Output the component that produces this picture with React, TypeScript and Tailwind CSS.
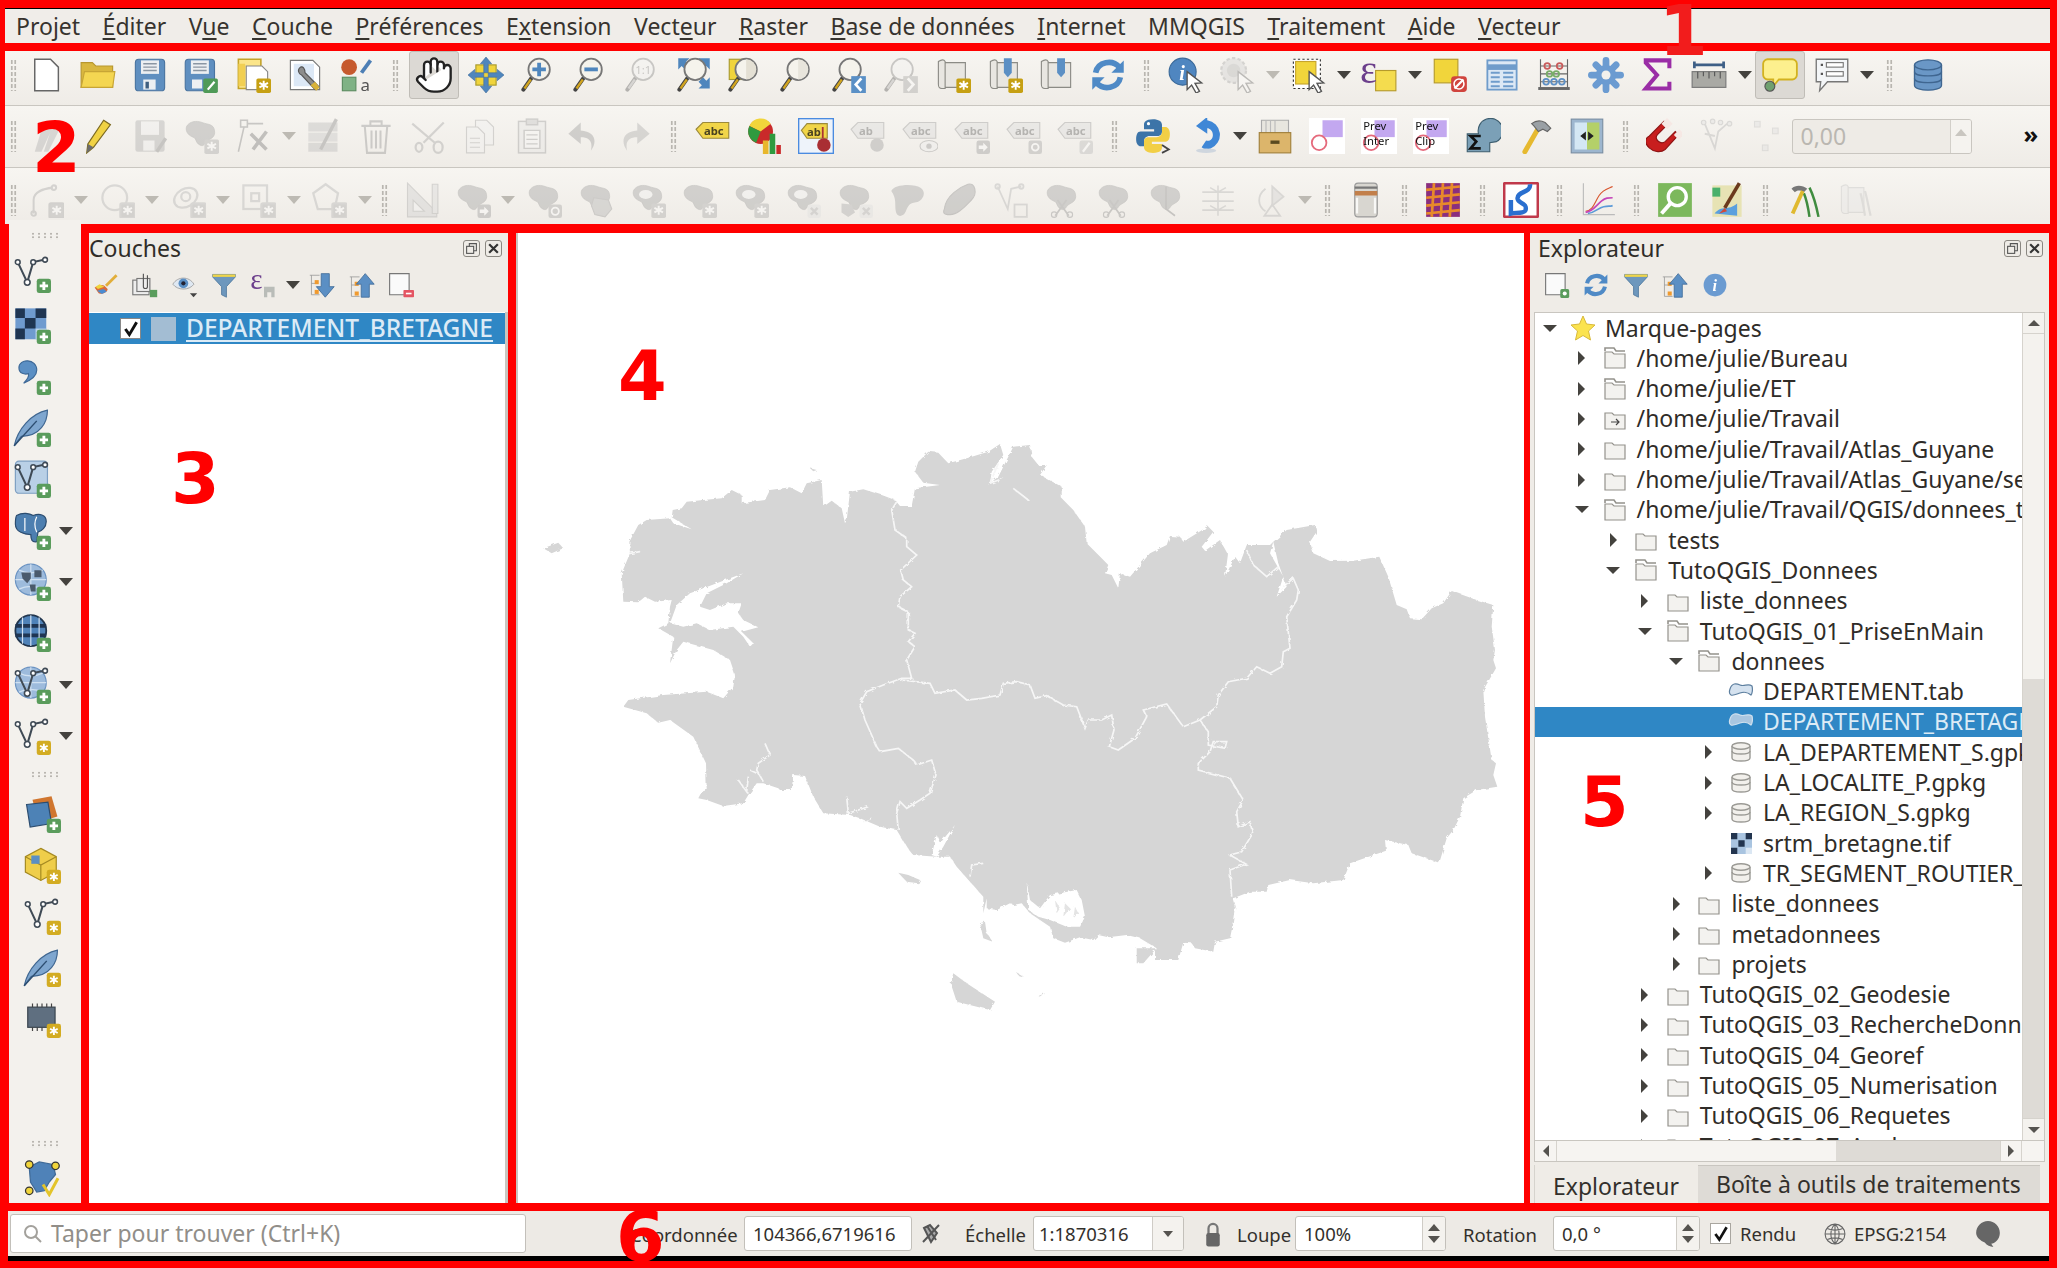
import type { ReactNode } from 'react';
import { Hand } from 'lucide-react';

const gearBadge = (
  <g>
    <rect x="19" y="19" width="13" height="13" rx="1.5" fill="#c6a013" />
    <path d="M25.5 21v8M21.7 23l7.6 4M21.7 27l7.6-4" stroke="#fff" strokeWidth="1.7" />
  </g>
);
const plusBadge = (
  <g>
    <rect x="20" y="20" width="12" height="12" rx="2" fill="#5a9c5c" />
    <path d="M26 22.5v7M22.5 26h7" stroke="#fff" strokeWidth="2.4" />
  </g>
);
const starBadge = (
  <g>
    <rect x="20" y="20" width="12" height="12" rx="2" fill="#d3ac22" />
    <path d="M26 22.5v7M22.8 24.2l6.4 3.6M22.8 27.8l6.4-3.6" stroke="#fff" strokeWidth="1.6" />
  </g>
);
const xBadge = (
  <g>
    <rect x="20" y="20" width="12" height="12" rx="2" fill="#e4dcd6" />
    <path d="M23 23l6 6M29 23l-6 6" stroke="#c99" strokeWidth="2.2" />
  </g>
);
const arrowBadge = (
  <g>
    <rect x="20" y="20" width="12" height="12" rx="2" fill="#8f8f8a" />
    <path d="M22 24.5h4v-2.5l4 4-4 4v-2.5h-4z" fill="#fff" />
  </g>
);
const blob = <path d="M3 8c2-5 9-6 14-4s10 1 11 7-3 7-6 9-3 6-7 4-3-6-6-7-7-4-6-9z" fill="#8f9689" stroke="#777" strokeWidth="0.6" />;
const mag = (
  <g>
    <path d="M10 19L3 29" stroke="#444" strokeWidth="3.6" strokeLinecap="round" />
    <path d="M9.6 20L4 28" stroke="#d2a51f" strokeWidth="2" />
    <circle cx="17" cy="11" r="9.5" fill="#f5f3ec" stroke="#777" strokeWidth="1.6" />
  </g>
);
const cursor = <path d="M17 13l13 10-6 .5 4 7-3 1.500-4-7-4 4z" fill="#fff" stroke="#555" strokeWidth="1.2" />;
const doc = (fill = '#fff') => <path d="M6 2h14l7 7v21H6z" fill={fill} stroke="#666" strokeWidth="1.3" />;
const vShape = (
  <g fill="none" stroke="#3f4a55" strokeWidth="1.7">
    <path d="M4 6l8 17 5-17 9-2" />
    <g fill="#fff" strokeWidth="1.3">
      <circle cx="4" cy="6" r="2" />
      <circle cx="12" cy="23" r="2.4" />
      <circle cx="17" cy="6" r="2" />
      <circle cx="27" cy="4" r="2" />
    </g>
  </g>
);
const globe = (
  <g>
    <circle cx="15" cy="14" r="13" fill="#9dbbdc" stroke="#6b93c2" />
    <path d="M2 14h26M15 1v26M5 6c6 3 14 3 20 0M5 22c6-3 14-3 20 0" stroke="#cfe0f1" fill="none" />
  </g>
);
const cyl = (c: string, s: string) => (
  <g fill={c} stroke={s} strokeWidth="1.2">
    <path d="M4 7v18c0 6 24 6 24 0V7" />
    <ellipse cx="16" cy="7" rx="12" ry="4.5" />
    <path d="M4 13c0 5 24 5 24 0M4 19c0 5 24 5 24 0" fill="none" />
  </g>
);
const abcTag = (t: string, c: string) => (
  <g>
    <path d="M1 10l6-6h23v14H7z" fill={c} stroke="#9c8a3a" strokeWidth="1" />
    <text x="8" y="15.5" fontSize="10" fontWeight="700" fontFamily="Noto Sans" fill="#4a4320">{t}</text>
  </g>
);
const prev = (a: string, b: string) => (
  <g>
    <rect x="0" y="0" width="32" height="32" fill="#fff" />
    <rect x="12" y="2" width="18" height="15" fill="#c3a8f0" />
    <circle cx="9" cy="22" r="6.5" fill="none" stroke="#e56a7c" strokeWidth="1.6" />
    <text x="2" y="11" fontSize="10" fontFamily="Noto Sans" fill="#111">{a}</text>
    <text x="2" y="24" fontSize="10" fontFamily="Noto Sans" fill="#111">{b}</text>
  </g>
);

const ICONS: Record<string, ReactNode> = {
  new: doc(),
  open: (
    <g>
      <path d="M1 27V5h10l3 3h15v19z" fill="#d9b73f" stroke="#b8972f" />
      <path d="M1 27l3-14h27l-2 14z" fill="#f4d651" stroke="#c7a535" />
    </g>
  ),
  save: (
    <g>
      <rect x="3" y="2" width="26" height="28" rx="3" fill="#5f8fc0" stroke="#4a74a0" />
      <path d="M8 3h16v12H8z" fill="#eceff2" />
      <path d="M10 6h12M10 9h12M10 12h12" stroke="#8a96a3" strokeWidth="1.3" />
      <rect x="10" y="20" width="11" height="9" fill="#eceff2" />
      <rect x="12" y="22" width="3" height="6" fill="#3f5f80" />
    </g>
  ),
  saveas: (
    <g>
      <rect x="2" y="2" width="26" height="28" rx="3" fill="#5f8fc0" stroke="#4a74a0" />
      <path d="M7 3h16v12H7z" fill="#eceff2" />
      <path d="M9 6h12M9 9h12M9 12h12" stroke="#8a96a3" strokeWidth="1.3" />
      <rect x="8" y="20" width="9" height="8" fill="#eceff2" />
      <rect x="18" y="19" width="13" height="13" rx="1.5" fill="#4f9a57" />
      <path d="M22 29l6-7" stroke="#fff" strokeWidth="2" />
    </g>
  ),
  layoutnew: (
    <g>
      <path d="M3 2h20v26H3z" fill="#fbe58a" stroke="#c4a328" strokeWidth="1.4" />
      <path d="M10 8h14l5 5v16H10z" fill="#fff" stroke="#888" />
      <path d="M3 6h6v20H3z" fill="#f1cf52" />
      {gearBadge}
    </g>
  ),
  layoutmgr: (
    <g>
      <path d="M3 3h20l6 6v20H3z" fill="#fff" stroke="#777" />
      <path d="M6 6h18v20H6z" fill="#dce8f6" />
      <path d="M12 9c-3 2-2 6 1 7l12 13 3-3-12-12c0-4-2-6-4-5z" fill="#8c8c8c" stroke="#555" />
      <path d="M21 25l5 5 3-3-4-5z" fill="#d8b23a" />
    </g>
  ),
  style: (
    <g>
      <circle cx="9" cy="9" r="7" fill="#c65a2e" />
      <path d="M20 14l8-11" stroke="#4d7fb5" strokeWidth="3.4" />
      <rect x="3" y="18" width="12" height="12" fill="#7fb285" stroke="#5c8c61" />
      <text x="19" y="30" fontSize="15" fontFamily="Noto Sans" fill="#555">a</text>
    </g>
  ),
  pancanvas: (
    <g>
      <rect x="7" y="7" width="18" height="18" fill="#f0d43c" stroke="#a99a2e" />
      <path d="M16 0l5 6h-3v8h-4V6h-3zM16 32l5-6h-3v-8h-4v8h-3zM0 16l6-5v3h8v4H6v3zM32 16l-6-5v3h-8v4h8v3z" fill="#4f86bd" stroke="#3c6a99" strokeWidth="0.5" />
    </g>
  ),
  zoomin: <g>{mag}<path d="M17 5v12M11 11h12" stroke="#4f86bd" strokeWidth="3.4" /></g>,
  zoomout: <g>{mag}<path d="M11 11h12" stroke="#4f86bd" strokeWidth="3.4" /></g>,
  zoom11: <g>{mag}<text x="10" y="15" fontSize="10" fontFamily="Noto Sans" fill="#777">1:1</text></g>,
  zoomfull: (
    <g>
      <path d="M2 1h10l-3 3 3 3-4 4-3-3-3 3zM30 1H20l3 3-3 3 4 4 3-3 3 3zM30 28H20l3-3-3-3 4-4 3 3 3-3z" fill="#4f86bd" />
      {mag}
    </g>
  ),
  zoomlayer: <g><rect x="2" y="2" width="18" height="18" fill="#f0d43c" stroke="#a99a2e" />{mag}<path d="M17 2a9 9 0 010 18z" fill="#e4e0d4" /></g>,
  zoomsel: <g>{mag}<path d="M17 2a9 9 0 010 18z" fill="#e8e5dc" /></g>,
  zoomlast: <g>{mag}<rect x="18" y="17" width="13" height="15" fill="#5a90c6" /><path d="M27 19l-5 5.500 5 5.500" stroke="#fff" strokeWidth="2.4" fill="none" /></g>,
  zoomnext: <g>{mag}<rect x="18" y="17" width="13" height="15" fill="#9a9a92" /><path d="M22 19l5 5.500-5 5.500" stroke="#fff" strokeWidth="2.4" fill="none" /></g>,
  scroll: (
    <g>
      <path d="M3 4c3-2 5-2 6 0v24H6c-3 0-3-2-3-4zM9 5h18v22H9z" fill="#e8e6e1" stroke="#8b8b85" />
      {gearBadge}
    </g>
  ),
  scrollpin: (
    <g>
      <path d="M3 4c3-2 5-2 6 0v24H6c-3 0-3-2-3-4zM9 5h18v22H9z" fill="#e8e6e1" stroke="#8b8b85" />
      <path d="M15 1h7v13l-3.500 4-3.500-4z" fill="#5b8fc4" />
      {gearBadge}
    </g>
  ),
  scrollshow: (
    <g>
      <path d="M3 4c3-2 5-2 6 0v24H6c-3 0-3-2-3-4zM9 5h20v22H9z" fill="#e8e6e1" stroke="#8b8b85" />
      <path d="M17 1h7v13l-3.500 4-3.500-4z" fill="#5b8fc4" />
    </g>
  ),
  refresh: (
    <g fill="none" strokeWidth="5" stroke="#4f8ac6">
      <path d="M5 14C7 4 20 2 26 9" />
      <path d="M27 18c-2 10-15 12-21 5" />
      <path d="M30 3v11H19z" fill="#4f8ac6" strokeWidth="0" />
      <path d="M2 29V18h11z" fill="#4f8ac6" strokeWidth="0" />
    </g>
  ),
  identify: (
    <g>
      <circle cx="13" cy="13" r="12" fill="#4f86c0" stroke="#3c6a99" />
      <text x="10" y="20" fontSize="18" fontStyle="italic" fontWeight="700" fontFamily="Liberation Serif" fill="#fff">i</text>
      {cursor}
    </g>
  ),
  run: (
    <g>
      <circle cx="13" cy="12" r="11" fill="#ccc" stroke="#999" strokeDasharray="3 2" strokeWidth="2" />
      <circle cx="13" cy="12" r="6" fill="#aab" />
      {cursor}
    </g>
  ),
  select: (
    <g>
      <rect x="3" y="2" width="24" height="26" fill="#fff" stroke="#333" strokeDasharray="2 2" />
      <rect x="5" y="4" width="18" height="20" fill="#f1d53b" stroke="#c7a52c" />
      {cursor}
    </g>
  ),
  expr: (
    <g>
      <rect x="13" y="12" width="18" height="18" fill="#f4dc4e" stroke="#b59a2c" />
      <text x="-1" y="23" fontSize="36" fontFamily="Liberation Serif" fill="#6c3f8c">ε</text>
    </g>
  ),
  deselect: (
    <g>
      <rect x="2" y="2" width="21" height="21" fill="#f1d53b" stroke="#b59a2c" />
      <rect x="17" y="17" width="14" height="14" rx="3" fill="#d0443e" />
      <path d="M20 28l8-8" stroke="#fff" strokeWidth="2" />
      <circle cx="24" cy="24" r="4.4" fill="none" stroke="#fff" strokeWidth="1.4" />
    </g>
  ),
  table: (
    <g>
      <rect x="3" y="3" width="26" height="26" fill="#dce8f5" stroke="#6f9ccb" strokeWidth="1.6" />
      <path d="M3 9h26" stroke="#6f9ccb" strokeWidth="5" />
      <path d="M6 14h8M17 14h9M6 18h8M17 18h9M6 22h8M17 22h9M6 26h8M17 26h9" stroke="#6f9ccb" strokeWidth="1.6" />
    </g>
  ),
  abacus: (
    <g fill="none">
      <path d="M4 2v25M28 2v25M4 8h24M4 15h24M4 22h24" stroke="#666" />
      <path d="M2 28h28" stroke="#666" strokeWidth="2.6" />
      <g stroke="#c85b5b" strokeWidth="1.6"><circle cx="10" cy="8" r="2.5" /><circle cx="21" cy="8" r="2.5" /></g>
      <g stroke="#79ad68" strokeWidth="1.6"><circle cx="12" cy="15" r="2.5" /><circle cx="18" cy="15" r="2.5" /></g>
      <g stroke="#5d8fc4" strokeWidth="1.6"><circle cx="9" cy="22" r="2.5" /><circle cx="16" cy="22" r="2.5" /><circle cx="23" cy="22" r="2.5" /></g>
    </g>
  ),
  gear: (
    <g>
      <g stroke="#6b9bd1" strokeWidth="6" strokeLinecap="round">
        <path d="M16 3v26M3 16h26M7 7l18 18M25 7L7 25" />
      </g>
      <circle cx="16" cy="16" r="9" fill="#6b9bd1" />
      <circle cx="16" cy="16" r="4" fill="#f2f0ec" />
    </g>
  ),
  sigma: <path d="M27 10V3H6v2l10 11L6 28h21v-6" fill="none" stroke="#9a2da6" strokeWidth="3.6" />,
  ruler: (
    <g>
      <path d="M3 4v6M29 4v6M3 7h26" stroke="#3e5f86" strokeWidth="2.4" />
      <rect x="1" y="13" width="30" height="14" fill="#a9a9a4" stroke="#777" />
      <path d="M6 13v6M11 13v4M16 13v6M21 13v4M26 13v6" stroke="#555" />
    </g>
  ),
  tip: (
    <g>
      <path d="M5 2h22c2 0 4 2 4 4v10c0 2-2 4-4 4H15l-5 6v-6H5c-2 0-4-2-4-4V6c0-2 2-4 4-4z" fill="#fdf08e" stroke="#d3b21f" strokeWidth="1.6" />
      <circle cx="7" cy="26" r="4.4" fill="#6fa06f" stroke="#555" />
    </g>
  ),
  annot: (
    <g>
      <path d="M2 2h28v20H12l-7 8 1-8H2z" fill="#f4f6f8" stroke="#777" strokeWidth="1.2" />
      <path d="M6 7h2M6 15h2" stroke="#555" strokeWidth="2" />
      <rect x="11" y="5" width="15" height="4" fill="#fff" stroke="#777" />
      <rect x="11" y="13" width="15" height="4" fill="#fff" stroke="#777" />
    </g>
  ),
  db: cyl('#6a97c6', '#3f6690'),
  toggle: (
    <g>
      <path d="M6 30L14 4l8 4-10 22zM14 30L22 6l6 4-10 20z" fill="#a8a59c" />
    </g>
  ),
  pencil: (
    <g>
      <path d="M21 2l6 4-15 20-6 5 1-8z" fill="#f0d244" stroke="#7c6a22" strokeWidth="1.1" />
      <path d="M6 31l1-8 5 3z" fill="#6c6c6c" />
    </g>
  ),
  saveedit: (
    <g>
      <rect x="3" y="2" width="26" height="28" rx="2" fill="#a5a29a" />
      <path d="M8 3h16v12H8z" fill="#eee" />
      <rect x="10" y="20" width="10" height="9" fill="#eee" />
      <path d="M22 30l8-12" stroke="#777" strokeWidth="3" />
    </g>
  ),
  blobgear: <g>{blob}{gearBadge}</g>,
  blobarrow: <g>{blob}{arrowBadge}</g>,
  blobrot: <g>{blob}<rect x="20" y="20" width="12" height="12" rx="2" fill="#999" /><circle cx="26" cy="26" r="3.2" fill="none" stroke="#fff" strokeWidth="1.6" /></g>,
  vertex: (
    <g fill="none" stroke="#777" strokeWidth="1.4">
      <rect x="5" y="2" width="6" height="6" />
      <path d="M11 5h14M8 8L3 30" />
      <path d="M14 14l14 14M28 12L16 28" stroke="#666" strokeWidth="3.2" />
    </g>
  ),
  tableedit: (
    <g>
      <rect x="2" y="4" width="26" height="8" fill="#b9b48f" />
      <rect x="2" y="13" width="26" height="8" fill="#c5c19f" />
      <rect x="2" y="22" width="26" height="8" fill="#b9b48f" />
      <path d="M27 1L13 28" stroke="#777" strokeWidth="3" />
    </g>
  ),
  trash: (
    <g fill="none" stroke="#a07e76" strokeWidth="1.8">
      <path d="M3 7h26M11 7V3h10v4M6 7l2 24h16l2-24M12 11v16M16 11v16M20 11v16" />
    </g>
  ),
  cut: (
    <g fill="none" stroke="#999" strokeWidth="2">
      <path d="M2 5l20 17M30 4L12 22" />
      <ellipse cx="25" cy="26" rx="4" ry="5" />
      <ellipse cx="8" cy="26" rx="3" ry="4" />
    </g>
  ),
  copy: (
    <g fill="#f2f1ec" stroke="#9a9a92">
      <path d="M12 2h10l6 6v16H12z" />
      <path d="M4 8h10l6 6v17H4z" />
      <path d="M7 18h9M7 22h9M7 26h9" />
    </g>
  ),
  paste: (
    <g fill="#e6e4dc" stroke="#8f8f86" strokeWidth="1.3">
      <rect x="4" y="3" width="24" height="28" />
      <rect x="11" y="1" width="10" height="5" fill="#bbb" />
      <path d="M9 11h14v16H9z" fill="#f8f7f3" />
      <path d="M11 15h10M11 19h10M11 23h10" />
    </g>
  ),
  undo: <path d="M14 4L3 14l11 9v-6c7 0 11 3 9 12 6-8 4-17-9-18z" fill="#a28b84" />,
  redo: <path d="M18 4l11 10-11 9v-6C11 17 7 20 9 29 3 21 5 12 18 11z" fill="#a0a399" />,
  abc: abcTag('abc', '#f1d548'),
  abcgreyeye: <g>{abcTag('abc', '#dad7cc')}<ellipse cx="24" cy="25" rx="8" ry="5" fill="#eee" stroke="#888" /><circle cx="24" cy="25" r="2.4" fill="#888" /></g>,
  abcgreya: <g>{abcTag('abc', '#dad7cc')}{arrowBadge}</g>,
  abcgreyr: <g>{abcTag('abc', '#dad7cc')}<rect x="20" y="20" width="12" height="12" rx="2" fill="#999" /><circle cx="26" cy="26" r="3" fill="none" stroke="#fff" strokeWidth="1.6" /></g>,
  abcgreyp: <g>{abcTag('abc', '#dad7cc')}<rect x="20" y="20" width="12" height="12" rx="2" fill="#b5b2a5" /><path d="M23 30l6-8" stroke="#fff" strokeWidth="2" /></g>,
  abgrey: <g>{abcTag('ab', '#dad7cc')}<circle cx="24" cy="24" r="6" fill="#9c8f8f" /></g>,
  diagram: (
    <g>
      <circle cx="13" cy="12" r="11" fill="#c92a2a" />
      <path d="M13 12L3 7A11 11 0 0 1 22 5z" fill="#f1d53b" />
      <path d="M13 12L3 7a11 11 0 0 0 6 15z" fill="#2f9a3f" />
      <rect x="15" y="20" width="5" height="12" fill="#e8b72c" />
      <rect x="21" y="14" width="5" height="18" fill="#2f9a3f" />
      <rect x="27" y="24" width="4" height="8" fill="#c92a2a" />
    </g>
  ),
  abpin: (
    <g>
      <rect x="0.5" y="0.5" width="31" height="31" fill="#eef3fa" stroke="#4a8be0" strokeWidth="1.4" />
      <path d="M3 11l5-6h18v13H8z" fill="#f1d548" stroke="#9c8a3a" />
      <text x="8" y="16" fontSize="10" fontWeight="700" fontFamily="Noto Sans" fill="#4a4320">ab</text>
      <path d="M22 8v10" stroke="#a33" strokeWidth="1.6" />
      <circle cx="23" cy="24" r="6" fill="#a92e33" />
    </g>
  ),
  python: (
    <g>
      <path d="M16 1c-7 0-8 3-8 5v4h9v2H5c-3 0-4 3-4 7s2 6 4 6h3v-4c0-3 2-5 5-5h7c3 0 4-2 4-4V6c0-3-3-5-8-5z" fill="#3c74a8" />
      <path d="M16 31c7 0 8-3 8-5v-3h-9v-2h12c3 0 4-3 4-7s-2-6-4-6h-3v4c0 3-2 5-5 5h-7c-3 0-4 2-4 4v5c0 3 3 5 8 5z" fill="#f2cf46" />
      <circle cx="12" cy="5" r="1.4" fill="#fff" />
      <path d="M24 24l6 4-6 3" fill="none" stroke="#444" strokeWidth="1.6" />
    </g>
  ),
  update: (
    <g>
      <path d="M18 2a13 13 0 0 1 3 25c-3 1-6 1-8-1l4-6c3 1 6-1 6-5s-3-6-5-6v5L8 7l10-8z" fill="#3f87d6" />
      <ellipse cx="17" cy="29" rx="9" ry="2" fill="#cfd6de" />
    </g>
  ),
  archive: (
    <g>
      <path d="M4 2h24v13H4z" fill="#e8e6df" stroke="#aaa" />
      <path d="M8 2v12M12 2v12M16 2v12" stroke="#bbb" />
      <rect x="2" y="13" width="28" height="18" fill="#dcb56b" stroke="#a07f3a" />
      <rect x="12" y="20" width="8" height="3" fill="#5a4a20" />
    </g>
  ),
  prev: prev('', ''),
  previnter: prev('Prev', 'Inter'),
  prevclip: prev('Prev', 'Clip'),
  sigmashape: (
    <g>
      <path d="M2 14h10a11 11 0 1 1 16 7l-6 1v8H2z" fill="#7ba0b7" stroke="#3f5f70" />
      <path d="M14 16H5l5 5-5 6h9" fill="none" stroke="#111" strokeWidth="2.4" />
    </g>
  ),
  hammer: (
    <g>
      <path d="M19 9L7 30" stroke="#e6b92f" strokeWidth="4.4" strokeLinecap="round" />
      <path d="M13 5c4-3 8-3 12-1l5 5-3 3-4-2-4 2-4-5z" fill="#9aa0a5" stroke="#666" />
    </g>
  ),
  split: (
    <g>
      <rect x="2" y="1" width="28" height="30" fill="#9db6cf" stroke="#7a8ea2" />
      <rect x="5" y="4" width="11" height="24" fill="#d4e7f4" />
      <rect x="16" y="4" width="11" height="24" fill="#b4d069" />
      <path d="M15 12l-5 4 5 4zM17 12l5 4-5 4z" fill="#222" />
    </g>
  ),
  magnet: (
    <g>
      <path d="M3 16L16 3l3 3-9 9c-3 4 3 9 7 6l9-9 3 3-12 13c-9 7-24-7-14-12z" fill="#c81e1e" stroke="#8e1515" />
      <rect x="15" y="1" width="7" height="7" transform="rotate(45 18 5)" fill="#f6e8e4" />
      <rect x="26" y="11" width="6" height="7" transform="rotate(45 29 15)" fill="#f6e8e4" />
    </g>
  ),
  tree: (
    <g stroke="#aaa" fill="#ddd">
      <path d="M6 5l9 22 3-15 8-7M15 16L6 14" fill="none" strokeWidth="1.6" />
      <circle cx="5" cy="4" r="2" /><circle cx="13" cy="3" r="2" /><circle cx="20" cy="4" r="2" /><circle cx="28" cy="5" r="2" />
    </g>
  ),
  dots: (
    <g fill="#ddd" stroke="#bbb">
      <rect x="4" y="3" width="5" height="5" /><rect x="20" y="9" width="5" height="5" /><rect x="11" y="24" width="5" height="5" />
    </g>
  ),
  nodeline: <g fill="none" stroke="#999" strokeWidth="1.8"><path d="M5 28V16C5 8 14 6 22 5" /><circle cx="5" cy="28" r="2" /><circle cx="23" cy="5" r="2" />{gearBadge}</g>,
  ring: <g fill="none" stroke="#aaa" strokeWidth="2"><circle cx="14" cy="14" r="11" />{gearBadge}</g>,
  ellipse: <g fill="none" stroke="#aaa" strokeWidth="2"><ellipse cx="14" cy="14" rx="11" ry="8" transform="rotate(-30 14 14)" /><circle cx="14" cy="13" r="4" />{gearBadge}</g>,
  square: <g fill="none" stroke="#aaa" strokeWidth="2"><rect x="3" y="3" width="21" height="21" /><rect x="10" y="10" width="7" height="7" />{gearBadge}</g>,
  hex: <g fill="none" stroke="#aaa" strokeWidth="2"><path d="M13 2l11 8-3 14H6L2 10z" />{gearBadge}</g>,
  triruler: (
    <g fill="#cfcabb" stroke="#999">
      <path d="M4 1v30h26V27z" />
      <path d="M9 16v10h10z" fill="#f2f0ea" />
      <path d="M26 2h5v26h-5z" fill="#d8d4c6" />
    </g>
  ),
  overlap: <g>{blob}<path d="M14 14l13 2 3 8-6 7-9-2-3-8z" fill="#a5aaa0" stroke="#888" /></g>,
  ringgear: <g>{blob}<ellipse cx="14" cy="11" rx="6" ry="4" fill="#f2f0ea" />{gearBadge}</g>,
  ringx: <g>{blob}<ellipse cx="14" cy="11" rx="6" ry="4" fill="#f2f0ea" />{xBadge}</g>,
  partx: <g>{blob}<path d="M4 19l9 1 3 7-6 4-6-4z" fill="#9aa090" />{xBadge}</g>,
  merge: <path d="M2 8c2-6 20-7 26-3s2 12-4 13-7 3-9 8-8 6-9 0 1-11-4-18z" fill="#8f9689" />,
  sausage: <path d="M3 24C4 12 18 4 24 2s9 8 3 14-12 13-19 13-6-3-5-5z" fill="#8f9689" stroke="#777" />,
  reshape: <g fill="none" stroke="#aaa" strokeWidth="1.6"><path d="M5 4l9 20 3-18 9-2" /><circle cx="5" cy="4" r="2" /><circle cx="26" cy="4" r="2" /><rect x="20" y="20" width="11" height="11" /></g>,
  splitcut: <g>{blob}<path d="M10 30l10-14M22 30L12 16" stroke="#a77" strokeWidth="1.6" /><circle cx="9" cy="29" r="2.4" fill="none" stroke="#a77" /><circle cx="23" cy="29" r="2.4" fill="none" stroke="#a77" /></g>,
  stitch: <g>{blob}<path d="M16 4v20l8 6" stroke="#777" strokeWidth="1.4" fill="none" /></g>,
  grid: <g stroke="#aaa" strokeWidth="1.4" fill="none"><path d="M2 9h28M2 17h28M2 25h28M16 3v27M9 5l7 4 7-4M9 21l7 4 7-4" /></g>,
  rotate: <g fill="none" stroke="#aaa" strokeWidth="1.6"><path d="M18 4l10 9-10 8z" fill="#ccc" /><path d="M12 6C4 12 5 22 12 26" /><path d="M18 20l-7 10h14z" /></g>,
  tin: (
    <g>
      <rect x="6" y="1" width="20" height="30" rx="3" fill="#d8d6d0" stroke="#999" />
      <path d="M6 8h20v4H6z" fill="#c27f4a" />
      <path d="M6 5h20" stroke="#777" strokeWidth="2" />
      <path d="M8 14v14M24 14v14" stroke="#f8f8f6" strokeWidth="2" />
    </g>
  ),
  mesh: (
    <g>
      <rect x="1" y="1" width="30" height="30" fill="#8a2f7e" />
      <path d="M1 7l30-3M1 14l30-3M1 21l30-3M1 28l30-3M8 1l-2 30M16 1l-2 30M24 1l-2 30" stroke="#e88a2a" strokeWidth="2.4" />
    </g>
  ),
  river: (
    <g>
      <rect x="1" y="1" width="30" height="30" rx="1" fill="#fff" stroke="#c0394b" strokeWidth="2.4" />
      <path d="M24 2c1 8-12 6-11 13 1 5 9 3 7 10-1 3-9 2-13 3V16" fill="none" stroke="#2a6fcf" strokeWidth="4" />
    </g>
  ),
  graph: (
    <g fill="none">
      <path d="M3 1v28h28" stroke="#bbb" />
      <path d="M5 26c7-1 8-8 12-14s8-6 12-8" stroke="#d8552e" />
      <path d="M5 27c7-1 10-7 14-10s6-3 10-3" stroke="#c546b9" strokeWidth="1.5" />
      <path d="M7 28c7-1 9-5 14-6s5 0 8-1" stroke="#5b9ad8" strokeWidth="1.5" />
    </g>
  ),
  greenmag: (
    <g>
      <rect x="1" y="1" width="30" height="30" fill="#7cb85c" />
      <circle cx="18" cy="13" r="8" fill="none" stroke="#fff" strokeWidth="3" />
      <path d="M12 19l-8 9" stroke="#fff" strokeWidth="3.4" />
    </g>
  ),
  mappaint: (
    <g>
      <rect x="3" y="3" width="26" height="28" fill="#e7e3b4" />
      <path d="M3 5h7v8H3z" fill="#4ab06b" />
      <path d="M5 28c6-8 12-2 20-9v11z" fill="#5ba0de" />
      <path d="M27 1L14 23" stroke="#6b3a1d" strokeWidth="3.2" />
      <path d="M14 23l-5 5 7-2z" fill="#d24a3a" />
    </g>
  ),
  tools: (
    <g>
      <path d="M20 5c4 8 6 16 8 26M15 10c3 7 4 14 5 21" stroke="#3f8c3f" strokeWidth="2.2" fill="none" />
      <path d="M4 6c4-4 10-3 14 0l-3 3c-3-2-6-2-8 0z" fill="#777" />
      <path d="M14 8L5 28" stroke="#e0b92f" strokeWidth="3.4" />
    </g>
  ),
  mapfaint: (
    <g>
      <path d="M3 4c3-2 5-2 6 0v24H6c-3 0-3-2-3-4zM9 5h14v22H9z" fill="#e8e6e1" stroke="#bbb" />
      <path d="M24 8c2 7 3 14 5 22M20 10c2 7 3 14 4 20" stroke="#bbb" strokeWidth="2" fill="none" />
    </g>
  ),
  vplus: <g>{vShape}{plusBadge}</g>,
  vstar: <g>{vShape}{starBadge}</g>,
  rasterplus: (
    <g>
      <rect x="2" y="2" width="26" height="26" fill="#6f9bcf" />
      <path d="M2 2h8v8H2zM19 2h9v8h-9zM10 10h9v9h-9zM2 19h8v9H2z" fill="#1f3552" />
      <rect x="19" y="19" width="9" height="9" fill="#bcd3ea" />
      {plusBadge}
    </g>
  ),
  comma: (
    <g>
      <path d="M5 9c0-8 15-8 15 2 0 6-6 9-11 11 2-2 5-5 4-8-3 1-8 0-8-5z" fill="#5b8fc4" stroke="#3f6a98" />
      {plusBadge}
    </g>
  ),
  feather: (
    <g>
      <path d="M1 31C4 17 15 4 29 1c0 10-6 22-22 22z" fill="#7ea6cf" stroke="#3f6690" />
      <path d="M1 31L20 10" stroke="#2c4d70" strokeWidth="1.2" />
      {plusBadge}
    </g>
  ),
  featherstar: (
    <g>
      <path d="M1 31C4 17 15 4 29 1c0 10-6 22-22 22z" fill="#7ea6cf" stroke="#3f6690" />
      <path d="M1 31L20 10" stroke="#2c4d70" strokeWidth="1.2" />
      {starBadge}
    </g>
  ),
  vbox: <g><rect x="2" y="1" width="27" height="27" rx="3" fill="#b9d0e6" stroke="#7d9fc2" />{vShape}{plusBadge}</g>,
  pg: (
    <g>
      <path d="M3 3c5-3 11-2 14 0 5-2 11-1 11 5 0 5-4 8-7 9l-1 8c-4 1-5-2-5-6-5 0-13-2-13-9 0-3 0-5 1-7z" fill="#4d7fb0" stroke="#2c4d70" />
      <path d="M10 5v11M20 4c-2 4-2 9 0 13" stroke="#fff" fill="none" />
      {plusBadge}
    </g>
  ),
  wms: (
    <g>
      {globe}
      <path d="M7 8h8v5l-3 4-4-4zM18 6h6v6h-6zM14 18h5v6h-4z" fill="#4a5a6c" />
      {plusBadge}
    </g>
  ),
  wmts: (
    <g>
      <circle cx="15" cy="14" r="13" fill="#4f82b8" stroke="#21354d" strokeWidth="1.5" />
      <path d="M2 10h26M2 18h26" stroke="#1f3552" strokeWidth="3" />
      <path d="M15 1v26M8 3v22M22 3v22" stroke="#cfe0f1" />
      {plusBadge}
    </g>
  ),
  wfs: <g>{globe}{vShape}{plusBadge}</g>,
  tempv: <g>{vShape}{starBadge}</g>,
  spatialite: (
    <g>
      <path d="M8 4l16-3 5 17-16 5z" fill="#d0762f" />
      <path d="M3 8l18-2 3 18-18 3z" fill="#4d82b6" stroke="#2c4d70" />
      {plusBadge}
    </g>
  ),
  gpkg: (
    <g>
      <path d="M15 2l13 7v13l-13 7-13-7V9z" fill="#efce4a" stroke="#a58a22" />
      <path d="M2 9l13 7 13-7M15 16v13" stroke="#a58a22" fill="none" />
      <rect x="7" y="8" width="7" height="7" fill="#5b8fc4" />
      {starBadge}
    </g>
  ),
  chip: (
    <g>
      <rect x="4" y="6" width="23" height="17" fill="#5f6f80" stroke="#3a4550" />
      <path d="M8 3v3M12 3v3M16 3v3M20 3v3M24 3v3M8 23v3M12 23v3M16 23v3" stroke="#444" />
      {starBadge}
    </g>
  ),
  digit: (
    <g>
      <path d="M5 8l8-4 11 2 2 8-5 6-4 7-6 1-5-8z" fill="#4f82b8" stroke="#3f6a98" />
      <circle cx="5" cy="6" r="3" fill="#f1d53b" stroke="#333" />
      <circle cx="26" cy="7" r="3" fill="#f1d53b" stroke="#333" />
      <circle cx="5" cy="27" r="3" fill="#f1d53b" stroke="#333" />
      <path d="M16 22l5 8 7-13" fill="none" stroke="#e3c42a" strokeWidth="2.4" />
    </g>
  ),
  brush: (
    <g>
      <path d="M2 19c4-1 8-5 12-2l4 4c0 4-6 7-11 5z" fill="#d96a3a" />
      <path d="M3 18l5-3 6 3-8 3z" fill="#f0d43c" />
      <path d="M5 23l8-2 4 3-6 3z" fill="#4c8bd0" />
      <path d="M16 17L29 4" stroke="#e2ae3a" strokeWidth="3.4" />
    </g>
  ),
  addgroup: (
    <g fill="#eee" stroke="#777" strokeWidth="1.4">
      <rect x="1" y="10" width="20" height="18" />
      <rect x="6" y="8" width="16" height="16" />
      <path d="M14 2v16c0 3 5 3 5 0V4" fill="none" stroke="#555" />
      <rect x="22" y="22" width="9" height="9" fill="#5a9c5c" stroke="none" />
    </g>
  ),
  eye: (
    <g>
      <path d="M1 15c6-10 20-10 26 0-6 8-20 8-26 0z" fill="#dfe8f2" stroke="#999" />
      <circle cx="14" cy="14" r="6" fill="#5b8fc4" />
      <circle cx="14" cy="14" r="2.6" fill="#223" />
      <path d="M22 26h9l-4.500 5z" fill="#444" />
    </g>
  ),
  funnel: (
    <g>
      <path d="M2 3h28v3L19 18v13l-6-3V18L2 6z" fill="#6d97bd" stroke="#4f789d" />
      <path d="M2 3h28v3H2z" fill="#efd54a" />
    </g>
  ),
  epsicon: (
    <g>
      <text x="-1" y="21" fontSize="36" fontFamily="Liberation Serif" fill="#6c3f8c">ε</text>
      <path d="M16 18h13v13h-4v-6h-5v6h-4z" fill="#b9bcb8" />
    </g>
  ),
  expand: (
    <g>
      <path d="M1 4h12M3 4v24h10M3 14h8" stroke="#999" fill="none" />
      <rect x="7" y="10" width="5" height="5" fill="#f09a2f" />
      <rect x="7" y="22" width="5" height="5" fill="#f09a2f" />
      <path d="M15 2h10v16h6L20 31 9 18h6z" fill="#5b8fc4" stroke="#3f6a98" />
    </g>
  ),
  collapse: (
    <g>
      <path d="M1 6h12M3 6v24h10M3 16h8" stroke="#999" fill="none" />
      <rect x="7" y="12" width="5" height="5" fill="#f09a2f" />
      <rect x="7" y="24" width="5" height="5" fill="#f09a2f" />
      <path d="M15 31h10V15h6L20 2 9 15h6z" fill="#5b8fc4" stroke="#3f6a98" />
    </g>
  ),
  removelayer: (
    <g>
      <path d="M2 2h24v26H2z" fill="#fafafa" stroke="#777" strokeWidth="1.4" />
      <rect x="19" y="22" width="13" height="9" rx="1" fill="#e45563" />
      <path d="M22 26.500h7" stroke="#fff" strokeWidth="2" />
    </g>
  ),
  addlayer: (
    <g>
      <path d="M2 2h24v26H2z" fill="#fafafa" stroke="#777" strokeWidth="1.4" />
      <rect x="20" y="21" width="11" height="11" rx="2" fill="#5a9c5c" />
      <circle cx="25.5" cy="26.5" r="2.5" fill="#fff" />
    </g>
  ),
  info: (
    <g>
      <circle cx="16" cy="16" r="14" fill="#6b9bd1" />
      <text x="13" y="23" fontSize="20" fontStyle="italic" fontWeight="700" fontFamily="Liberation Serif" fill="#fff">i</text>
    </g>
  ),
};

const TOOLBAR_1 = ['new', 'open', 'save', 'saveas', 'layoutnew', 'layoutmgr', 'style', '|', '*pan', 'pancanvas', 'zoomin', 'zoomout', '-zoom11', 'zoomfull', 'zoomlayer', 'zoomsel', 'zoomlast', '-zoomnext', 'scroll', 'scrollpin', 'scrollshow', 'refresh', '|', 'identify', '-run', '-v', 'select', 'v', 'expr', 'v', 'deselect', 'table', 'abacus', 'gear', 'sigma', 'ruler', 'v', '*tip', 'annot', 'v', '|', 'db'];
const TOOLBAR_2 = ['-toggle', 'pencil', '-saveedit', '-blobgear', '-vertex', '-v', '-tableedit', '-trash', '-cut', '-copy', '-paste', '-undo', '-redo', '|', 'abc', 'diagram', 'abpin', '-abgrey', '-abcgreyeye', '-abcgreya', '-abcgreyr', '-abcgreyp', '|', 'python', 'update', 'v', 'archive', 'prev', 'previnter', 'prevclip', 'sigmashape', 'hammer', 'split', '|', 'magnet', '-tree', '-dots'];
const TOOLBAR_3 = ['-nodeline', '-v', '-ring', '-v', '-ellipse', '-v', '-square', '-v', '-hex', '-v', '|s', '-triruler', '-blobarrow', '-v', '-blobrot', '-overlap', '-ringgear', '-blobgear', '-ringgear', '-ringx', '-partx', '-merge', '-sausage', '-reshape', '-splitcut', '-splitcut', '-stitch', '-grid', '-rotate', '-v', '|', 'tin', '|', 'mesh', '|', 'river', '|', 'graph', '|', 'greenmag', 'mappaint', '|', 'tools', '-mapfaint'];
const LEFT_1 = [['vplus', false], ['rasterplus', false], ['comma', false], ['feather', false], ['vbox', false], ['pg', true], ['wms', true], ['wmts', false], ['wfs', true], ['tempv', true]] as const;
const LEFT_2 = ['spatialite', 'gpkg', 'vstar', 'featherstar', 'chip'];
const COUCHES_TOOLS = ['brush', 'addgroup', 'eye', 'funnel', 'epsicon', 'v', 'expand', 'collapse', 'removelayer'];
const EXPLORER_TOOLS = ['addlayer', 'refresh', 'funnel', 'collapse', 'info'];

const MENU: [string, string, string][] = [
  ['Pro', 'j', 'et'], ['', 'É', 'diter'], ['V', 'u', 'e'], ['', 'C', 'ouche'], ['', 'P', 'références'], ['E', 'x', 'tension'], ['Vect', 'e', 'ur'],
  ['', 'R', 'aster'], ['', 'B', 'ase de données'], ['', 'I', 'nternet'], ['MMQGIS', '', ''], ['', 'T', 'raitement'], ['', 'A', 'ide'], ['', 'V', 'ecteur'],
];

type Row = { level: number; arrow?: 'open' | 'closed'; icon: string; text: string; selected?: boolean };
const TREE: Row[] = [
  { level: 0, arrow: 'open', icon: 'star', text: 'Marque-pages' },
  { level: 1, arrow: 'closed', icon: 'tab', text: '/home/julie/Bureau' },
  { level: 1, arrow: 'closed', icon: 'tab', text: '/home/julie/ET' },
  { level: 1, arrow: 'closed', icon: 'link', text: '/home/julie/Travail' },
  { level: 1, arrow: 'closed', icon: 'folder', text: '/home/julie/Travail/Atlas_Guyane' },
  { level: 1, arrow: 'closed', icon: 'folder', text: '/home/julie/Travail/Atlas_Guyane/se' },
  { level: 1, arrow: 'open', icon: 'tab', text: '/home/julie/Travail/QGIS/donnees_tuto' },
  { level: 2, arrow: 'closed', icon: 'folder', text: 'tests' },
  { level: 2, arrow: 'open', icon: 'tab', text: 'TutoQGIS_Donnees' },
  { level: 3, arrow: 'closed', icon: 'folder', text: 'liste_donnees' },
  { level: 3, arrow: 'open', icon: 'tab', text: 'TutoQGIS_01_PriseEnMain' },
  { level: 4, arrow: 'open', icon: 'tab', text: 'donnees' },
  { level: 5, icon: 'poly', text: 'DEPARTEMENT.tab' },
  { level: 5, icon: 'poly', text: 'DEPARTEMENT_BRETAGNE', selected: true },
  { level: 5, arrow: 'closed', icon: 'gpkg', text: 'LA_DEPARTEMENT_S.gpkg' },
  { level: 5, arrow: 'closed', icon: 'gpkg', text: 'LA_LOCALITE_P.gpkg' },
  { level: 5, arrow: 'closed', icon: 'gpkg', text: 'LA_REGION_S.gpkg' },
  { level: 5, icon: 'raster', text: 'srtm_bretagne.tif' },
  { level: 5, arrow: 'closed', icon: 'gpkg', text: 'TR_SEGMENT_ROUTIER_L.gpkg' },
  { level: 4, arrow: 'closed', icon: 'folder', text: 'liste_donnees' },
  { level: 4, arrow: 'closed', icon: 'folder', text: 'metadonnees' },
  { level: 4, arrow: 'closed', icon: 'folder', text: 'projets' },
  { level: 3, arrow: 'closed', icon: 'folder', text: 'TutoQGIS_02_Geodesie' },
  { level: 3, arrow: 'closed', icon: 'folder', text: 'TutoQGIS_03_RechercheDonnees' },
  { level: 3, arrow: 'closed', icon: 'folder', text: 'TutoQGIS_04_Georef' },
  { level: 3, arrow: 'closed', icon: 'folder', text: 'TutoQGIS_05_Numerisation' },
  { level: 3, arrow: 'closed', icon: 'folder', text: 'TutoQGIS_06_Requetes' },
  { level: 3, arrow: 'closed', icon: 'folder', text: 'TutoQGIS_07_Analyses' },
];

// Map traced on three 3x views; page = origin + point / 3
const view = (ox: number, oy: number) => (pts: string) =>
  pts.split(' ').map((p) => {
    const [x, y] = p.split(',').map(Number);
    return `${(ox + x / 3).toFixed(1)},${(oy + y / 3).toFixed(1)}`;
  }).join(' ');
const W = view(530, 430);
const E = view(1020, 430);
const S = view(780, 700);

const OUTLINE = [
  W('280,515 275,430 300,370 298,335 325,285 350,270 420,265 430,280 485,298 425,262 428,240 455,235 470,215 520,210 575,205 605,180 635,195 635,220 705,210 720,180 780,172 815,190 830,160 875,150 880,230 905,212 935,235 945,280 950,270 960,185 1000,178 1055,195 1095,210 1110,228 1145,228 1155,175 1230,165 1180,158 1155,125 1165,95 1195,65 1225,68 1255,100 1310,85 1375,65 1410,42 1420,75 1385,125 1380,160 1405,140 1450,50 1500,45'),
  E('35,80 55,105 80,105 60,135 125,170 125,205 160,240 195,290 200,340 245,385 265,405 255,430 275,435 295,475 300,430 330,440 390,370 440,345 450,318 480,320 490,335 555,295 560,285 580,305 545,350 555,362 600,330 630,385 615,440 645,380 660,400 680,345 750,345 760,335 800,300 885,285 890,305 870,335 880,370 930,393 1000,392 1078,380 1105,440 1130,525 1160,538 1170,565 1205,568 1235,535 1270,520 1295,483 1370,510 1420,525 1415,590 1425,660 1420,690 1428,715 1390,780 1395,860 1415,990 1428,1000 1420,1035 1432,1070 1370,1080 1330,1105 1320,1160 1300,1200 1280,1225 1258,1298 1175,1270 1165,1245 1095,1230 1098,1262 990,1300 970,1350 880,1360 810,1350 745,1365 740,1385 690,1385 640,1405 650,1440'),
  S('1365,620 1355,690 1350,715 1305,725 1300,755 1245,745 1235,730 1210,728 1195,780 1125,780 1125,750 1090,790 1070,790 1070,745 1130,745 1080,715 1040,705 985,712 955,705 940,720 900,712 855,728 820,715 810,680 780,660 750,640 725,610 700,615 690,610 650,630 620,625 620,595 610,640 610,590 570,545 530,500 510,470 470,470 400,465 380,440 350,390 300,380 240,355 210,345 130,340 100,290 75,228 40,225 35,270 0,270'),
  W('745,1075 700,1060 680,1060 655,1095 640,1120 580,1128 530,1110 505,1105 515,1085 530,1080 528,1000 490,920 420,870 385,878 350,850 280,830 295,810 400,795 530,785 580,805 610,770 615,735 600,690 550,660 460,635 440,660 420,700 430,620 385,595 415,580 420,530 425,510 375,515 345,500 325,517'),
].join(' ');

const ISLANDS = [
  W('40,355 85,338 100,355 65,370'),
  W('840,115 860,120 850,124'),
  S('355,518 385,525 420,540 415,550 380,545'),
  S('520,820 560,850 645,905 630,930 530,905 512,850'),
  S('600,670 615,665 620,700 638,725 610,715'),
  S('775,888 795,880 785,892'),
  S('708,816 732,830 715,826'),
];

const WATER = [
  W('440,525 420,580 460,590 500,580 540,600 610,590 640,620 660,650 670,640 635,605 685,592 640,570 625,550 635,520 590,520 540,540 510,530 530,490 590,460 640,430 560,460 480,490'),
  S('740,545 750,600 780,625 810,585 890,570 905,600 915,650 900,680 860,680 810,660 775,650 745,630'),
  S('470,405 480,430 525,375 490,440 470,470 455,465'),
  E('760,335 775,400 800,470 770,500 790,440 750,370'),
  E('600,335 625,365 615,440 640,380 680,345'),
];

const ISLETS = [S('825,600 840,625 830,640'), S('855,610 870,625 850,650'), S('885,620 895,640 880,655')];

const LINES = [
  W('1100,215 1085,240 1095,300 1130,325 1130,350 1160,375 1112,420 1120,450 1145,470 1110,500 1105,530 1135,545 1135,600 1155,610 1135,635 1155,650 1130,690 1145,745 1115,745 1060,765 1010,785 990,820 1005,870 1040,950 1050,965 1105,955 1150,990 1160,1005 1205,990 1218,1035 1200,1090 1170,1110 1130,1135 1110,1115 1100,1150 1105,1200'),
  `${W('1115,750 1200,760 1215,790 1275,780 1310,810 1355,805 1410,795 1420,760 1460,755 1500,765')} ${E('45,805 80,797 130,825 170,830 195,895 205,870 245,870 275,855 282,900 268,950 295,960 345,925 380,860 370,840 440,822 490,890 540,870 590,830 595,795 625,755 680,745 710,710 750,730 785,710 790,665 810,655 800,560 830,510 835,480 820,445 790,470')}`,
  E('540,870 565,905 565,945 615,955 620,935 580,935 570,965 535,1000 535,1020 630,1045 670,1110 650,1145 655,1190 690,1175 698,1210 665,1265 630,1275 678,1302 630,1320 635,1400'),
  E('680,360 700,405 740,440 775,410'),
  W('705,940 720,975 685,1000 680,1020 700,1055'),
  W('660,1020 680,1030'),
  W('625,1050 650,1085 655,1040'),
  W('950,1100 955,1150 1015,1130'),
  W('1360,1300 1325,1305 1320,1340'),
  W('1405,100 1380,160 1420,145'),
  W('1450,175 1495,210'),
  W('330,365 300,370'),
  W('1000,1175 1025,1165'),
];

function Icon({ name, size = 36, className = '' }: { name: string; size?: number; className?: string }) {
  return (
    <svg viewBox="0 0 32 32" width={size} height={size} className={`blur-[0.4px] ${className}`}>
      {ICONS[name]}
    </svg>
  );
}

function Drop({ off = false }: { off?: boolean }) {
  return <span className={`w-0 h-0 border-x-[7px] border-x-transparent border-t-[8px] ${off ? 'border-t-[#bdbab3]' : 'border-t-[#44423e]'}`} />;
}

function GripV() {
  return <span className="block w-[7px] h-[32px] bg-[radial-gradient(#b9b6b0_1px,transparent_1px)] bg-[length:3.5px_6px]" />;
}

function GripH() {
  return <span className="block w-[30px] h-[8px] bg-[radial-gradient(#b9b6b0_1px,transparent_1px)] bg-[length:6px_3.5px]" />;
}

function ToolItem({ item }: { item: string }) {
  if (item === '|' || item === '|s') {
    return <div className={`flex justify-center shrink-0 ${item === '|s' ? 'w-[21px]' : 'w-[25.5px]'}`}><GripV /></div>;
  }
  if (item === 'v' || item === '-v') {
    return <div className="w-[19px] flex justify-center shrink-0"><Drop off={item === '-v'} /></div>;
  }
  const off = item.startsWith('-');
  const active = item.startsWith('*');
  const name = item.replace(/^[-*]/, '');
  return (
    <div className="w-[51.85px] h-[48px] flex items-center justify-center shrink-0 relative">
      {active && <div className="absolute left-[1px] top-0 w-[50px] h-[48px] bg-[#dcd9d4] border border-[#c0bdb7] rounded-[3px]" />}
      {name === 'pan' ? (
        <Hand size={40} fill="#fff" stroke="#222" strokeWidth={1.4} className="relative" />
      ) : (
        <Icon name={name} className={`relative ${off ? 'opacity-35 grayscale' : ''}`} />
      )}
    </div>
  );
}

function Toolbar({ items, className, children }: { items: string[]; className: string; children?: ReactNode }) {
  return (
    <div className={`flex items-center pl-[1px] bg-gradient-to-b from-[#f7f5f1] to-[#efece7] border-b border-[#c9c6c0] ${className}`}>
      <div className="w-[14px] flex justify-center shrink-0"><GripV /></div>
      {items.map((item, i) => <ToolItem key={i} item={item} />)}
      {children}
    </div>
  );
}

function SmallTools({ items, className }: { items: string[]; className: string }) {
  return (
    <div className={`flex items-center h-[40px] ${className}`}>
      {items.map((item, i) => item === 'v'
        ? <div key={i} className="w-[19px] flex justify-center"><Drop /></div>
        : <div key={i} className="w-[39.5px] flex justify-center"><Icon name={item} size={26} /></div>)}
    </div>
  );
}

function DockTitle({ title, className }: { title: string; className: string }) {
  return (
    <div className={`h-[32px] pb-[2px] pr-[6px] flex items-center justify-between ${className}`}>
      <span className="text-[23px] text-[#2f2c28]">{title}</span>
      <div className="flex gap-[5px]">
        <span className="w-[17px] h-[17px] border border-[#8a8781] rounded-[3px] flex items-center justify-center">
          <svg viewBox="0 0 12 12" width="13" height="13" fill="none" stroke="#555"><rect x="1.5" y="4" width="6.5" height="6.5" /><path d="M4 4V1.5h6.5V8H8" /></svg>
        </span>
        <span className="w-[17px] h-[17px] border border-[#8a8781] rounded-[3px] flex items-center justify-center">
          <svg viewBox="0 0 12 12" width="13" height="13" fill="none" stroke="#333" strokeWidth="2"><path d="M2 2l8 8M10 2l-8 8" /></svg>
        </span>
      </div>
    </div>
  );
}

function TreeIcon({ kind, selected }: { kind: string; selected?: boolean }) {
  if (kind === 'star') {
    return <svg viewBox="0 0 26 26" width="26" height="26"><path d="M13 1l3.500 8 8.500 1-6.500 6 2 9-7.500-4.500L5.500 25l2-9L1 10l8.500-1z" fill="#fbe34f" stroke="#d8b93a" /></svg>;
  }
  if (kind === 'poly') {
    return <svg viewBox="0 0 26 22" width="26" height="22"><path d="M2 8c2-6 6-6 10-4s8-2 12 1c1 4 0 8-1 9-3-3-8-3-11-2s-7 3-9 2-2-3-1-6z" fill={selected ? '#a9c6e0' : '#d5e2ef'} stroke={selected ? '#cfe0ee' : '#5d7f9f'} strokeWidth="1.2" /></svg>;
  }
  if (kind === 'gpkg') {
    return <svg viewBox="0 0 22 22" width="22" height="22" fill="#f2f0ec" stroke="#9b9a95" strokeWidth="1.4"><path d="M2 5v12c0 4 18 4 18 0V5" /><ellipse cx="11" cy="5" rx="9" ry="3.2" /><path d="M2 10c0 4 18 4 18 0" fill="none" /></svg>;
  }
  if (kind === 'raster') {
    return <svg viewBox="0 0 20 20" width="21" height="21"><rect width="20" height="20" fill="#a9c4e0" /><path d="M0 0h6v6H0zM14 0h6v6h-6zM7 7h6v6H7zM0 14h6v6H0z" fill="#22344e" /><rect x="14" y="14" width="6" height="6" fill="#dbe7f3" /></svg>;
  }
  return (
    <svg viewBox="0 0 24 24" width="24" height="24" fill="#f3f2ef" stroke="#94928c" strokeWidth="1.2">
      {kind === 'tab' && <path d="M2 5V2h9l2 3h9" fill="none" strokeWidth="1.6" />}
      <path d="M2 22V6h7l2 2h11v14z" />
      {kind === 'link' && <path d="M8 15h8M13 12l3 3-3 3" fill="none" stroke="#444" />}
    </svg>
  );
}

function TreeRow({ row }: { row: Row }) {
  return (
    <div
      className={`h-[30.3px] flex items-center whitespace-nowrap ${row.selected ? 'bg-[#2f87c5] text-[#dcebf6]' : 'text-[#2f2c28]'}`}
      style={{ paddingLeft: 8 + 31.6 * row.level }}
    >
      <span className="w-[14px] flex justify-center shrink-0">
        {row.arrow === 'open' && <span className="w-0 h-0 border-x-[7px] border-x-transparent border-t-[7px] border-t-[#44423e]" />}
        {row.arrow === 'closed' && <span className="w-0 h-0 border-y-[7px] border-y-transparent border-l-[7px] border-l-[#44423e]" />}
      </span>
      <span className="w-[26px] ml-[13px] flex justify-center shrink-0"><TreeIcon kind={row.icon} selected={row.selected} /></span>
      <span className="ml-[9px]">{row.text}</span>
    </div>
  );
}

function Spin() {
  return (
    <span className="w-[23px] h-full border-l border-[#cfccc6] flex flex-col items-center justify-center gap-[5px] bg-[#f4f2ee]">
      <span className="w-0 h-0 border-x-[6px] border-x-transparent border-b-[7px] border-b-[#55534f]" />
      <span className="w-0 h-0 border-x-[6px] border-x-transparent border-t-[7px] border-t-[#55534f]" />
    </span>
  );
}

function Field({ value, width, children }: { value: string; width: string; children?: ReactNode }) {
  return (
    <div className={`h-[35px] bg-white border border-[#c3c0ba] rounded-[3px] flex items-center overflow-hidden shrink-0 ${width}`}>
      <span className="flex-1 pl-[8px] text-[#33302c]">{value}</span>
      {children}
    </div>
  );
}

function Num({ children, className }: { children: string; className: string }) {
  return <span className={`absolute z-20 leading-none text-[70px] font-bold text-[#f00] [font-family:'DejaVu_Sans',sans-serif] ${className}`}>{children}</span>;
}

function BretagneMap() {
  return (
    <svg viewBox="518 420 1006 620" width="1006" height="620" className="mt-[187px] blur-[0.4px]">
      <defs>
        <filter id="coast" x="-2%" y="-2%" width="104%" height="104%">
          <feTurbulence type="fractalNoise" baseFrequency="0.22" numOctaves="2" seed="4" />
          <feDisplacementMap in="SourceGraphic" scale="3.5" />
        </filter>
      </defs>
      <g filter="url(#coast)">
        <polygon points={OUTLINE} fill="#d6d6d6" />
        {ISLANDS.map((p) => <polygon key={p} points={p} fill="#d6d6d6" />)}
        {WATER.map((p) => <polygon key={p} points={p} fill="#fff" />)}
        {ISLETS.map((p) => <polygon key={p} points={p} fill="#e4e4e4" />)}
        {LINES.map((p) => <polyline key={p} points={p} fill="none" stroke="#f6f6f6" strokeWidth="1.7" />)}
      </g>
    </svg>
  );
}

export default function App() {
  return (
    <div className="relative w-[2057px] h-[1268px] overflow-hidden bg-[#f00] flex flex-col text-[#2f2c28] [font-family:'Noto_Sans',sans-serif]">
      <Num className="left-[1659px] top-[-4px] !text-[#f21c1c]">1</Num>
      <Num className="left-[32px] top-[113px]">2</Num>
      <Num className="left-[171px] top-[444px]">3</Num>
      <Num className="left-[618px] top-[341px]">4</Num>
      <Num className="left-[1580px] top-[767px]">5</Num>
      <Num className="left-[616px] top-[1202px]">6</Num>

      <div className="h-[8px] shrink-0" />
      <div className="h-px ml-[5px] w-[2045px] bg-black shrink-0" />

      {/* Menu */}
      <div className="h-[34px] ml-[5px] w-[2045px] shrink-0 bg-[#f0ede9] flex items-center pl-[11px] gap-[22.5px] text-[23px] text-[#37332e] whitespace-nowrap">
        {MENU.map(([a, u, b]) => (
          <span key={a + u + b}>{a}<span className="underline underline-offset-[3px]">{u}</span>{b}</span>
        ))}
      </div>
      <div className="h-[8px] shrink-0" />

      {/* Toolbars */}
      <div className="ml-[5px] w-[2045px] shrink-0 flex flex-col">
        <Toolbar items={TOOLBAR_1} className="h-[55px] pb-[6px]" />
        <Toolbar items={TOOLBAR_2} className="h-[62px] pb-[1px]">
          <div className="ml-[-2px] w-[180px] h-[35px] bg-[#eeebe6] border border-[#c9c6c0] rounded-[3px] flex items-center overflow-hidden shrink-0">
            <span className="flex-1 pl-[8px] text-[23px] text-[#bab7b1]">0,00</span>
            <span className="w-[21px] h-full bg-[#f5f3ef] border-l border-[#d2cfc9] flex justify-center pt-[9px]">
              <span className="w-0 h-0 border-x-[6px] border-x-transparent border-b-[7px] border-b-[#c9c6c0]" />
            </span>
          </div>
          <span className="ml-[52px] text-[24px] leading-none font-bold text-[#111] pb-[5px]">»</span>
        </Toolbar>
        <Toolbar items={TOOLBAR_3} className="h-[56px] pt-[8px] !border-b-0" />
      </div>
      <div className="h-[9px] shrink-0" />

      {/* Main area */}
      <div className="h-[970px] shrink-0 flex">
        <div className="relative z-10 -mt-[13px] ml-[9px] w-[72px] bg-[#f3f1ed] flex flex-col items-stretch">
          <div className="h-[25px] mt-[3px] flex justify-center items-center"><GripH /></div>
          {LEFT_1.map(([name, drop]) => (
            <div key={name} className="h-[51.4px] flex items-center pl-[4px] shrink-0">
              <Icon name={name} size={38} />
              {drop && <span className="ml-[8px] flex"><Drop /></span>}
            </div>
          ))}
          <div className="h-[26px] flex justify-center items-center"><GripH /></div>
          {LEFT_2.map((name) => (
            <div key={name} className="h-[51.4px] pr-[6px] flex items-center justify-center shrink-0"><Icon name={name} size={38} /></div>
          ))}
          <div className="mt-auto h-[26px] flex justify-center items-center"><GripH /></div>
          <div className="h-[46px] pr-[4px] flex items-start justify-center"><Icon name="digit" size={40} /></div>
        </div>

        <div className="ml-[8px] w-[419px] bg-[#efece7] flex flex-col">
          <DockTitle title="Couches" className="pl-0" />
          <SmallTools items={COUCHES_TOOLS} className="-ml-[3px]" />
          <div className="mt-[7px] flex-1 bg-white border-r-[3px] border-[#c9c6c0]">
            <div className="h-[31px] mt-px bg-[#2f87c5] flex items-center pl-[31px]">
              <span className="w-[21px] h-[21px] bg-white border border-[#888] flex items-center justify-center">
                <svg viewBox="0 0 16 16" width="18" height="18" fill="none" stroke="#111" strokeWidth="2.6"><path d="M3 8l3.500 5L13 2" /></svg>
              </span>
              <span className="ml-[10px] w-[25px] h-[24px] bg-[#a3bdd3]" />
              <span className="ml-[10px] text-[24.5px] font-medium text-[#dcebf6] underline underline-offset-[3px] whitespace-nowrap">DEPARTEMENT_BRETAGNE</span>
            </div>
          </div>
        </div>

        <div className="ml-[8px] w-[1008px] bg-white border-l-2 border-[#c9c6c0] overflow-hidden">
          <BretagneMap />
        </div>

        <div className="ml-[6px] w-[519px] bg-[#efece7] flex flex-col">
          <DockTitle title="Explorateur" className="pl-[8px]" />
          <SmallTools items={EXPLORER_TOOLS} className="ml-[7px]" />
          <div className="mt-[7px] mx-[4px] h-[851px] border border-[#c9c6c0] bg-white flex flex-col overflow-hidden">
            <div className="flex h-[827px]">
              <div className="w-[491px] overflow-hidden text-[23px] leading-none">
                {TREE.map((row) => <TreeRow key={row.level + row.text} row={row} />)}
              </div>
              <div className="w-[22px] flex flex-col border-l border-[#d6d3cd] bg-[#f4f2ee]">
                <div className="h-[21px] flex justify-center pt-[7px] border-b border-[#d6d3cd]"><span className="w-0 h-0 border-x-[6px] border-x-transparent border-b-[6px] border-b-[#55534f]" /></div>
                <div className="h-[345px]" />
                <div className="flex-1 bg-[#dedbd6]" />
                <div className="h-[22px] flex justify-center pt-[8px] border-t border-[#d6d3cd]"><span className="w-0 h-0 border-x-[6px] border-x-transparent border-t-[6px] border-t-[#55534f]" /></div>
              </div>
            </div>
            <div className="flex flex-1 border-t border-[#c9c6c0] bg-[#f6f4f1]">
              <div className="w-[22px] flex items-center justify-center border-r border-[#d6d3cd]"><span className="w-0 h-0 border-y-[6px] border-y-transparent border-r-[6px] border-r-[#55534f]" /></div>
              <div className="w-[279px]" />
              <div className="flex-1 bg-[#dedbd6]" />
              <div className="w-[22px] flex items-center justify-center border-x border-[#d6d3cd]"><span className="w-0 h-0 border-y-[6px] border-y-transparent border-l-[6px] border-l-[#55534f]" /></div>
              <div className="w-[22px]" />
            </div>
          </div>
          <div className="mt-[3px] mx-[4px] flex flex-1 text-[23px] whitespace-nowrap">
            <div className="w-[164px] pl-[18px] pt-[4px] flex items-center border-l border-[#d6d3cd] text-[#33302c]">Explorateur</div>
            <div className="w-[342px] pl-[18px] flex items-center bg-[#dedbd6] border-t border-[#c9c6c0] text-[#33302c]">Boîte à outils de traitements</div>
          </div>
        </div>
      </div>
      <div className="h-[8px] shrink-0" />

      {/* Status bar */}
      <div className="h-[45px] ml-[8px] w-[2041px] shrink-0 bg-[#edeae5] flex items-center text-[18.5px] text-[#33302c] whitespace-nowrap">
        <div className="ml-[2px] w-[516px] h-[39px] bg-white border border-[#c3c0ba] rounded-[3px] flex items-center pl-[12px] shrink-0">
          <svg viewBox="0 0 20 20" width="20" height="20" fill="none" stroke="#a3a19c" strokeWidth="2"><circle cx="8" cy="8" r="6" /><path d="M12.500 12.500L18 18" /></svg>
          <span className="ml-[8px] text-[23px] text-[#918e89]">Taper pour trouver (Ctrl+K)</span>
        </div>
        <span className="ml-[104px] w-[107px] pt-[3px]">Coordonnée</span>
        <div className="ml-[7px]"><Field value="104366,6719616" width="w-[168px]" /></div>
        <svg viewBox="0 0 20 24" width="20" height="24" className="ml-[9px] shrink-0" fill="none" stroke="#555" strokeWidth="2"><path d="M3 6l6-3 7 8-6 9z" fill="#aaa" /><path d="M2 20L18 3M6 4l9 14" /></svg>
        <span className="ml-[24px] w-[61px] pt-[3px]">Échelle</span>
        <div className="ml-[7px] w-[151px] h-[35px] bg-white border border-[#c3c0ba] rounded-[3px] flex items-center shrink-0 overflow-hidden">
          <span className="flex-1 pl-[5px]">1:1870316</span>
          <span className="w-[31px] h-full bg-[#f4f2ee] border-l border-[#cfccc6] flex items-center justify-center"><span className="w-0 h-0 border-x-[5px] border-x-transparent border-t-[6px] border-t-[#55534f]" /></span>
        </div>
        <svg viewBox="0 0 16 24" width="18" height="28" className="ml-[20px] shrink-0"><path d="M4 12V7a4 4 0 018 0v5" fill="none" stroke="#777" strokeWidth="2" /><rect x="2" y="11" width="12" height="12" rx="2" fill="#666" /></svg>
        <span className="ml-[15px] w-[52px] pt-[3px]">Loupe</span>
        <div className="ml-[6px]"><Field value="100%" width="w-[151px]"><Spin /></Field></div>
        <span className="ml-[17px] w-[74px] pt-[3px]">Rotation</span>
        <div className="ml-[16px]"><Field value="0,0 °" width="w-[147px]"><Spin /></Field></div>
        <span className="ml-[10px] w-[21px] h-[21px] bg-white border border-[#a9a6a0] flex items-center justify-center shrink-0">
          <svg viewBox="0 0 16 16" width="18" height="18" fill="none" stroke="#111" strokeWidth="2.4"><path d="M3 8l3.500 5L13 2" /></svg>
        </span>
        <span className="ml-[9px] w-[54px]">Rendu</span>
        <svg viewBox="0 0 20 20" width="22" height="24" className="ml-[30px] shrink-0" fill="none" stroke="#666"><circle cx="10" cy="10" r="9" /><path d="M1 10h18M10 1v18M3 5c4 2 10 2 14 0M3 15c4-2 10-2 14 0M10 1c-5 5-5 13 0 18M10 1c5 5 5 13 0 18" /></svg>
        <span className="ml-[8px] w-[91px]">EPSG:2154</span>
        <svg viewBox="0 0 24 26" width="26" height="28" className="ml-[30px] shrink-0"><path d="M12 1c6 0 11 5 11 11 0 6-5 10-8 10l2 3c-3 0-6-1-8-4-4-2-8-5-8-9C1 6 6 1 12 1z" fill="#666" /></svg>
      </div>
      <div className="h-[5px] ml-[8px] w-[2041px] bg-black shrink-0" />
    </div>
  );
}
